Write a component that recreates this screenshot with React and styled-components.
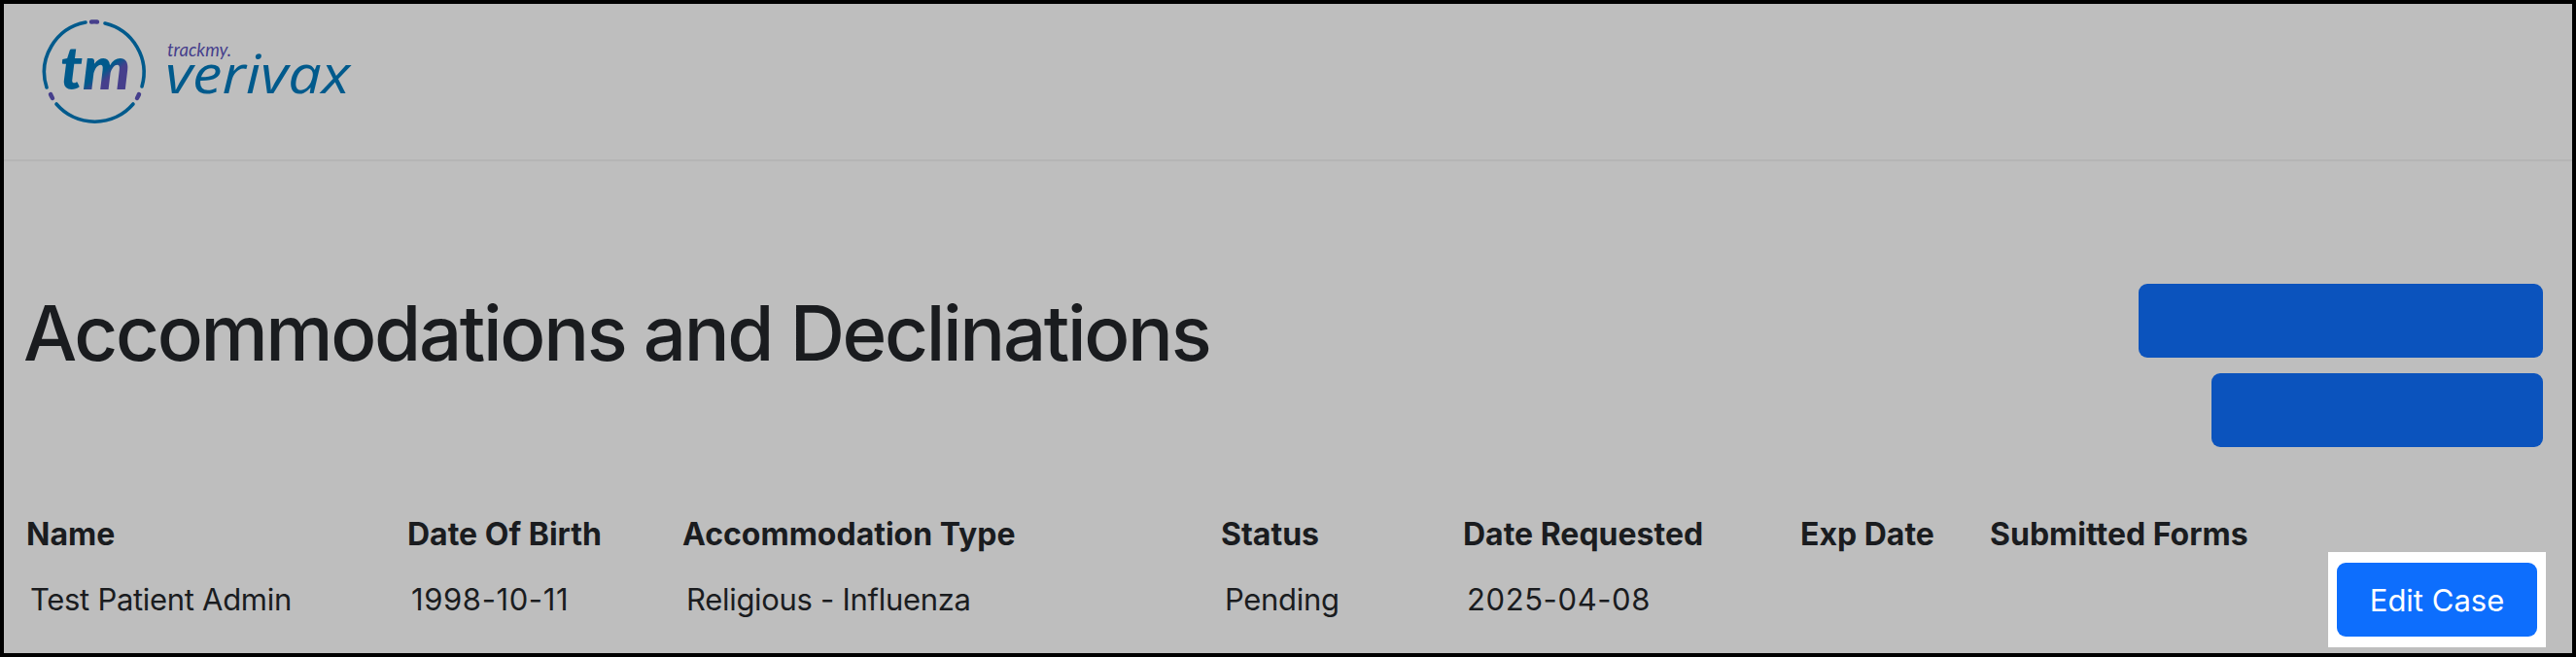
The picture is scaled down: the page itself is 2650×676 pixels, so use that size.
import styled, { createGlobalStyle } from "styled-components";

const columns = [
  { label: "Name", value: "Test Patient Admin" },
  { label: "Date Of Birth", value: "1998-10-11", numeric: true },
  { label: "Accommodation Type", value: "Religious - Influenza" },
  { label: "Status", value: "Pending" },
  { label: "Date Requested", value: "2025-04-08", numeric: true },
  { label: "Exp Date", value: "" },
  { label: "Submitted Forms", value: "" },
];

const Logo = () => (
  <svg width="340" height="116" viewBox="40 14 340 116" aria-label="trackmy verivax">
    <defs>
      <linearGradient id="tmFill" gradientUnits="userSpaceOnUse" x1="98" y1="62" x2="112" y2="80">
        <stop offset="0.6" stopColor="#005a8c" />
        <stop offset="1" stopColor="#463f8c" />
      </linearGradient>
    </defs>
    <g fill="none" strokeWidth="3.6" strokeLinecap="round">
      <path d="M108 24 A52 52 0 0 1 146 89" stroke="#005a8c" />
      <path d="M137 107 A52 52 0 0 1 58 107" stroke="#005a8c" />
      <path d="M48 90 A52 52 0 0 1 88 23" stroke="#005a8c" />
      <path d="M94 22.5 A52 52 0 0 1 100 22.5" stroke="#463f8c" strokeWidth="4.4" />
      <path d="M143 97 A52 52 0 0 1 141 101" stroke="#463f8c" strokeWidth="4.4" />
      <path d="M52 97 A52 52 0 0 0 54 101" stroke="#463f8c" strokeWidth="4.4" />
    </g>
    <text x="62" y="92" fontFamily="Lato, sans-serif" fontSize="60" fontWeight="900" fontStyle="italic" fill="url(#tmFill)" textLength="72" lengthAdjust="spacingAndGlyphs">tm</text>
    <text x="172" y="58" fontFamily="Lato, sans-serif" fontSize="19" fontStyle="italic" fill="#463f8c" textLength="66" lengthAdjust="spacingAndGlyphs">trackmy.</text>
    <text x="170" y="96" fontFamily="Open Sans, sans-serif" fontSize="54" fontWeight="500" fontStyle="italic" fill="#005a8c" textLength="190" lengthAdjust="spacingAndGlyphs">verivax</text>
  </svg>
);

const App = () => {
  return (
    <>
      <GlobalStyle />
      <Frame>
        <Header>
          <Logo />
        </Header>
        <Main>
          <TitleRow>
            <Title>Accommodations and Declinations</Title>
            <Actions>
              <BlankButton $width={416} />
              <BlankButton $width={341} />
            </Actions>
          </TitleRow>
          <CaseTable>
            {columns.map((column) => (
              <HeadCell key={column.label}>{column.label}</HeadCell>
            ))}
            {columns.map((column) => (
              <BodyCell key={column.label} $numeric={column.numeric}>
                {column.value}
              </BodyCell>
            ))}
          </CaseTable>
          <Spotlight>
            <EditButton>Edit Case</EditButton>
          </Spotlight>
        </Main>
      </Frame>
    </>
  );
};

export default App;

const GlobalStyle = createGlobalStyle`
  * {
    box-sizing: border-box;
  }
  body {
    margin: 0;
    font-family: Inter, "Liberation Sans", sans-serif;
    color: #1a1c1f;
  }
`;

const Frame = styled.div`
  width: 2650px;
  height: 676px;
  border: 4px solid #000;
  background: #bebebe;
  overflow: hidden;
`;

const Header = styled.header`
  height: 162px;
  padding: 10px 0 0 36px;
  border-bottom: 2px solid #b5b5b5;
`;

const Main = styled.main`
  position: relative;
  height: 506px;
  padding: 126px 30px 0 20px;
`;

const TitleRow = styled.div`
  display: flex;
  justify-content: space-between;
  align-items: flex-start;
`;

const Title = styled.h1`
  margin: 4px 0 0;
  font-size: 78px;
  font-weight: 500;
  line-height: 1.2;
  letter-spacing: -2.35px;
`;

const Actions = styled.div`
  display: flex;
  flex-direction: column;
  align-items: flex-end;
  gap: 16px;
`;

const BlankButton = styled.div`
  width: ${({ $width }) => $width}px;
  height: 76px;
  border-radius: 9px;
  background: #0b53bd;
`;

const CaseTable = styled.div`
  display: grid;
  grid-template-columns: 392px 283px 554px 249px 347px 195px 400px;
  grid-auto-rows: 67px;
  align-items: center;
  margin: 56px 0 0 3px;
`;

const HeadCell = styled.div`
  font-size: 32px;
  font-weight: 700;
`;

const BodyCell = styled.div`
  padding-left: 4px;
  font-size: 31px;
  font-weight: 400;
  letter-spacing: ${({ $numeric }) => ($numeric ? "0.6px" : "-0.3px")};
`;

const Spotlight = styled.div`
  position: absolute;
  right: 27px;
  bottom: 6px;
  padding: 11px 9px;
  background: #fff;
`;

const EditButton = styled.button`
  display: block;
  width: 206px;
  height: 76px;
  padding: 0;
  border: none;
  border-radius: 9px;
  background: #0d6efd;
  color: #fff;
  font-family: inherit;
  font-size: 31px;
`;
